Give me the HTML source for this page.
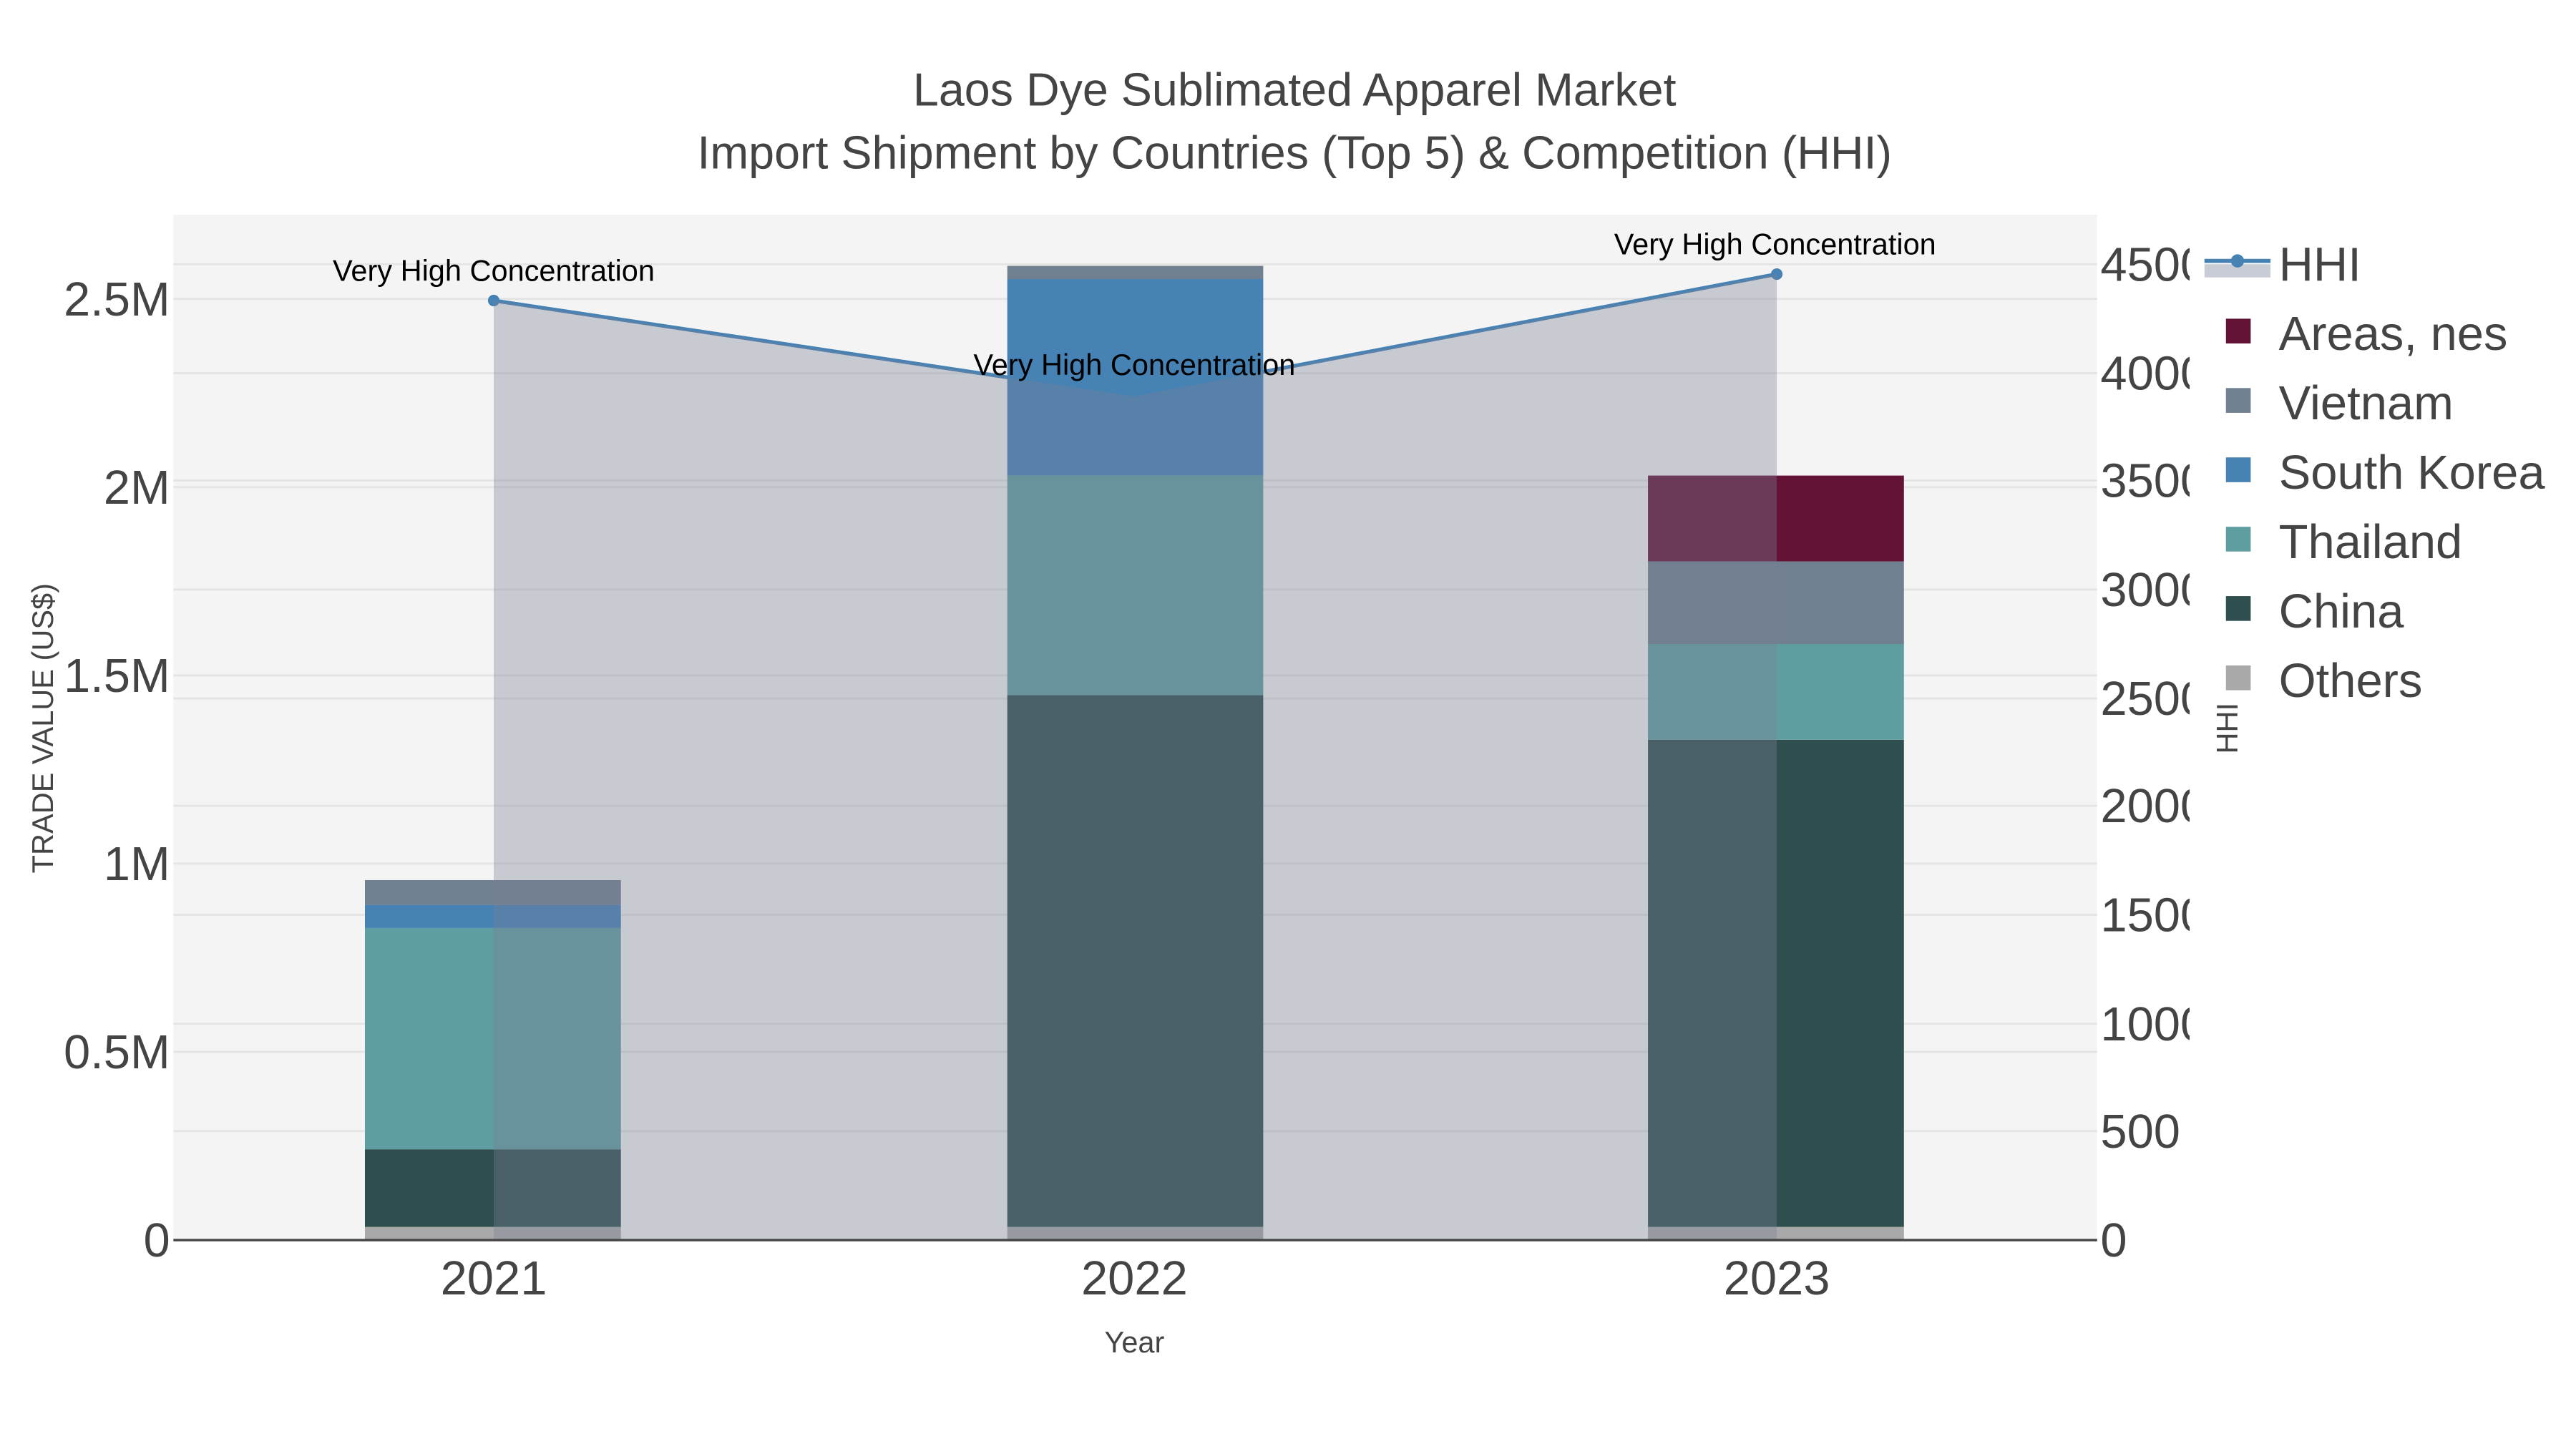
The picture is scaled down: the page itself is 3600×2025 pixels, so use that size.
<!DOCTYPE html>
<html><head><meta charset="utf-8"><style>html,body{margin:0;padding:0;background:#fff}svg{display:block}</style></head><body>
<svg xmlns="http://www.w3.org/2000/svg" width="3600" height="2025" viewBox="0 0 1560 877.5" font-family="Liberation Sans, sans-serif">
<defs><clipPath id="rc"><rect x="1270" y="120" width="56" height="660"/></clipPath></defs>
<rect width="1560" height="877.5" fill="#fff"/>
<rect x="105" y="130" width="1165" height="621" fill="#f4f4f4"/>
<g stroke="#e4e4e4" stroke-width="1.2">
<line x1="105" x2="1270" y1="637" y2="637"/><line x1="105" x2="1270" y1="523" y2="523"/><line x1="105" x2="1270" y1="409" y2="409"/><line x1="105" x2="1270" y1="295" y2="295"/><line x1="105" x2="1270" y1="181" y2="181"/>
<line x1="105" x2="1270" y1="685" y2="685"/><line x1="105" x2="1270" y1="620" y2="620"/><line x1="105" x2="1270" y1="554" y2="554"/><line x1="105" x2="1270" y1="488" y2="488"/><line x1="105" x2="1270" y1="423" y2="423"/><line x1="105" x2="1270" y1="357" y2="357"/><line x1="105" x2="1270" y1="291" y2="291"/><line x1="105" x2="1270" y1="226" y2="226"/><line x1="105" x2="1270" y1="160" y2="160"/>
</g>
<polyline points="299,182 687,240 1076,166" fill="none" stroke="#4682b4" stroke-width="2.3"/>
<circle cx="299" cy="182" r="3.5" fill="#4682b4"/><circle cx="1076" cy="166" r="3.5" fill="#4682b4"/>
<rect x="221" y="743" width="155" height="8" fill="#a9a9a9"/>
<rect x="221" y="696" width="155" height="47" fill="#2f4f4f"/>
<rect x="221" y="562" width="155" height="134" fill="#5f9ea0"/>
<rect x="221" y="548" width="155" height="14" fill="#4682b4"/>
<rect x="221" y="533" width="155" height="15" fill="#708090"/>
<rect x="610" y="743" width="155" height="8" fill="#a9a9a9"/>
<rect x="610" y="421" width="155" height="322" fill="#2f4f4f"/>
<rect x="610" y="288" width="155" height="133" fill="#5f9ea0"/>
<rect x="610" y="169" width="155" height="119" fill="#4682b4"/>
<rect x="610" y="161" width="155" height="8" fill="#708090"/>
<rect x="998" y="743" width="155" height="8" fill="#a9a9a9"/>
<rect x="998" y="448" width="155" height="295" fill="#2f4f4f"/>
<rect x="998" y="390" width="155" height="58" fill="#5f9ea0"/>
<rect x="998" y="340" width="155" height="50" fill="#708090"/>
<rect x="998" y="288" width="155" height="52" fill="#631436"/>
<polygon points="299,182 687,240 1076,166 1076,751 299,751" fill="rgb(123,128,150)" fill-opacity="0.36"/>
<line x1="105" x2="1270" y1="751" y2="751" stroke="#444" stroke-width="1.5"/>
<g font-size="18" fill="#000" text-anchor="middle">
<text x="299" y="170">Very High Concentration</text>
<text x="687" y="227">Very High Concentration</text>
<text x="1075" y="154">Very High Concentration</text>
</g>
<g fill="#444" text-anchor="middle">
<text x="784" y="64" font-size="28">Laos Dye Sublimated Apparel Market</text>
<text x="784" y="102" font-size="28">Import Shipment by Countries (Top 5) &amp; Competition (HHI)</text>
</g>
<g fill="#444" font-size="29" text-anchor="end">
<text x="103" y="761">0</text><text x="103" y="647">0.5M</text><text x="103" y="533">1M</text><text x="103" y="419">1.5M</text><text x="103" y="305">2M</text><text x="103" y="191">2.5M</text>
</g>
<g fill="#444" font-size="29" clip-path="url(#rc)">
<text x="1272" y="761">0</text><text x="1272" y="695">500</text><text x="1272" y="630">1000</text><text x="1272" y="564">1500</text><text x="1272" y="498">2000</text><text x="1272" y="433">2500</text><text x="1272" y="367">3000</text><text x="1272" y="301">3500</text><text x="1272" y="236">4000</text><text x="1272" y="170">4500</text>
</g>
<g fill="#444" font-size="29" text-anchor="middle">
<text x="299" y="784">2021</text><text x="687" y="784">2022</text><text x="1076" y="784">2023</text>
</g>
<text x="687" y="819" font-size="18" fill="#444" text-anchor="middle">Year</text>
<text transform="translate(32,441) rotate(-90)" font-size="18" fill="#444" text-anchor="middle">TRADE VALUE (US$)</text>
<text transform="translate(1355,441) rotate(-90)" font-size="18" fill="#444" text-anchor="middle">HHI</text>
<rect x="1335" y="160" width="40" height="8" fill="#c8ccd4"/>
<line x1="1335" x2="1375" y1="158" y2="158" stroke="#4682b4" stroke-width="2.5"/>
<circle cx="1355" cy="158" r="4" fill="#4682b4"/>
<rect x="1348" y="193" width="15" height="15" fill="#631436"/>
<rect x="1348" y="235" width="15" height="15" fill="#708090"/>
<rect x="1348" y="277" width="15" height="15" fill="#4682b4"/>
<rect x="1348" y="319" width="15" height="15" fill="#5f9ea0"/>
<rect x="1348" y="361" width="15" height="15" fill="#2f4f4f"/>
<rect x="1348" y="403" width="15" height="15" fill="#a9a9a9"/>
<g fill="#444" font-size="29">
<text x="1380" y="170">HHI</text><text x="1380" y="212">Areas, nes</text><text x="1380" y="254">Vietnam</text><text x="1380" y="296">South Korea</text><text x="1380" y="338">Thailand</text><text x="1380" y="380">China</text><text x="1380" y="422">Others</text>
</g>
</svg>
</body></html>
